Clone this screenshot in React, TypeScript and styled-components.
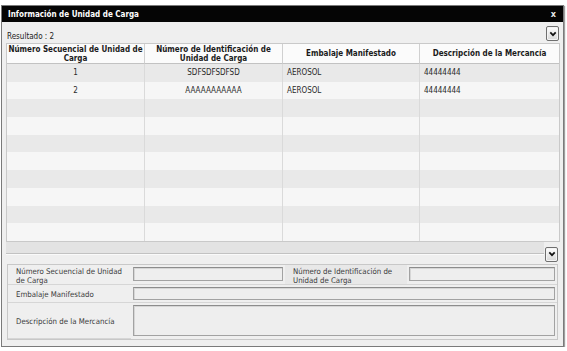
import React from 'react';
import styled, { createGlobalStyle } from 'styled-components';

const GlobalStyle = createGlobalStyle`
  html, body {
    margin: 0;
    padding: 0;
    background: #ffffff;
    font-family: "DejaVu Sans Condensed", "DejaVu Sans", "Liberation Sans", sans-serif;
  }
`;

const Dialog = styled.div`
  width: 563px;
  height: 342px;
  margin: 5px 0 0 1px;
  box-sizing: border-box;
  border: 1px solid #7a7a7a;
  background: #efefef;
  display: flex;
  flex-direction: column;
  box-shadow: 1px 1px 1px #a0a0a0;
`;

const TitleBar = styled.div`
  flex-shrink: 0;
  height: 16px;
  background: #050505;
  color: #ffffff;
  display: flex;
  align-items: center;
  justify-content: space-between;
  padding: 0 7px 0 6px;
  font-size: 8px;
  font-weight: bold;
`;

const CloseX = styled.span`
  font-size: 9px;
  font-weight: bold;
  color: #e8e8e8;
`;

const Body = styled.div`
  flex: 1;
  display: flex;
  flex-direction: column;
  padding: 4px 4px 0 4px;
`;

const ToolRow = styled.div`
  flex-shrink: 0;
  display: flex;
  justify-content: space-between;
  align-items: flex-end;
  height: 15px;
  margin-bottom: 2px;
`;

const CollapseButton = styled.div`
  flex-shrink: 0;
  width: 13px;
  height: 15px;
  box-sizing: border-box;
  border: 1px solid #6f6f6f;
  border-radius: 2px;
  background: linear-gradient(#ffffff, #d8d8d8);
  box-shadow: inset 0 0 0 1px #f4f4f4;
  display: flex;
  align-items: center;
  justify-content: center;
`;

const ResultLabel = styled.div`
  font-size: 8px;
  color: #222;
  line-height: 9px;
  margin: 0 0 0 1px;
`;

const TableBox = styled.div`
  flex-shrink: 0;
  width: 554px;
  box-sizing: border-box;
  border: 1px solid #c9c9c9;
  background: #ffffff;
`;

const Grid = styled.div`
  display: grid;
  grid-template-columns: 138px 138px 137px 1fr;
  grid-auto-rows: 17.7px;
  grid-template-rows: 20px;
`;

const HeadCell = styled.div`
  box-sizing: border-box;
  border-right: 1px solid #d0d0d0;
  border-bottom: 1px solid #c2c2c2;
  background: #fbfbfb;
  font-size: 8px;
  font-weight: bold;
  color: #1a1a1a;
  text-align: center;
  line-height: 9px;
  display: flex;
  align-items: center;
  justify-content: center;
  &:nth-child(4) { border-right: none; }
`;

const Cell = styled.div<{ $odd: boolean; $center?: boolean; $last?: boolean }>`
  box-sizing: border-box;
  border-right: ${p => (p.$last ? 'none' : '1px solid #dadada')};
  background: ${p => (p.$odd ? '#e9e9e9' : '#f6f6f6')};
  font-size: 8px;
  color: #2a2a2a;
  display: flex;
  align-items: center;
  justify-content: ${p => (p.$center ? 'center' : 'flex-start')};
  padding-left: ${p => (p.$center ? '0' : '4px')};
`;

const SplitRow = styled.div`
  flex-shrink: 0;
  display: flex;
  align-items: flex-end;
  gap: 1px;
  height: 20px;
  margin-bottom: 2px;
  padding-right: 1px;
`;

const Pager = styled.div`
  flex: 1;
  height: 11px;
  margin-bottom: 8px;
  background: #e3e3e3;
  border-bottom: 1px solid #c2c2c2;
  box-shadow: 0 1px 0 #fafafa;
`;

const Form = styled.div`
  flex-shrink: 0;
  margin: 0 1px 0 1px;
  border: 1px solid #c8c8c8;
  display: grid;
  grid-template-columns: 123px 154px 122px 1fr;
  grid-template-rows: 20px 18px 36px;
`;

const Label = styled.div<{ $shade?: boolean }>`
  font-size: 7.8px;
  color: #3a3a3a;
  line-height: 9px;
  padding: 3px 0 0 8px;
  display: flex;
  align-items: center;
  background: ${p => (p.$shade ? '#e8e8e8' : 'transparent')};
  border-bottom: 1px solid #d6d6d6;
`;

const FieldWrap = styled.div<{ $span?: number }>`
  grid-column: span ${p => p.$span ?? 1};
  display: flex;
  align-items: center;
  padding: 0 2px;
  border-bottom: 1px solid #d6d6d6;
  &:last-child { border-bottom: none; }
`;

const Input = styled.div<{ $h: number }>`
  width: 100%;
  height: ${p => p.$h}px;
  box-sizing: border-box;
  border: 1px solid #a2a2a2;
  border-top-color: #8c8c8c;
  background: #eeeeee;
  box-shadow: inset 1px 1px 0 #d6d6d6;
`;

const Chevron = () => (
  <svg width="8" height="6" viewBox="0 0 8 6">
    <path d="M1.3 1.4 L4 4.2 L6.7 1.4" stroke="#111" strokeWidth="1.7" fill="none" />
  </svg>
);

const headers = [
  'Número Secuencial de Unidad de Carga',
  'Número de Identificación de Unidad de Carga',
  'Embalaje Manifestado',
  'Descripción de la Mercancía',
];

const rows: (string[] | null)[] = [
  ['1', 'SDFSDFSDFSD', 'AEROSOL', '44444444'],
  ['2', 'AAAAAAAAAAA', 'AEROSOL', '44444444'],
  null, null, null, null, null, null, null, null,
];

export default function App() {
  return (
    <>
      <GlobalStyle />
      <Dialog>
        <TitleBar>
          <span>Información de Unidad de Carga</span>
          <CloseX>x</CloseX>
        </TitleBar>
        <Body>
          <ToolRow>
            <ResultLabel>Resultado : 2</ResultLabel>
            <CollapseButton><Chevron /></CollapseButton>
          </ToolRow>
          <TableBox>
            <Grid>
              {headers.map(h => <HeadCell key={h}>{h}</HeadCell>)}
              {rows.map((r, i) =>
                [0, 1, 2, 3].map(c => (
                  <Cell key={`${i}-${c}`} $odd={i % 2 === 0} $center={c < 2} $last={c === 3}>
                    {r ? r[c] : ''}
                  </Cell>
                ))
              )}
            </Grid>
          </TableBox>
          <SplitRow>
            <Pager />
            <CollapseButton><Chevron /></CollapseButton>
          </SplitRow>
          <Form>
            <Label>Número Secuencial de Unidad de Carga</Label>
            <FieldWrap><Input $h={14} /></FieldWrap>
            <Label $shade>Número de Identificación de Unidad de Carga</Label>
            <FieldWrap><Input $h={14} /></FieldWrap>
            <Label>Embalaje Manifestado</Label>
            <FieldWrap $span={3}><Input $h={13} /></FieldWrap>
            <Label>Descripción de la Mercancía</Label>
            <FieldWrap $span={3}><Input $h={31} /></FieldWrap>
          </Form>
        </Body>
      </Dialog>
    </>
  );
}
